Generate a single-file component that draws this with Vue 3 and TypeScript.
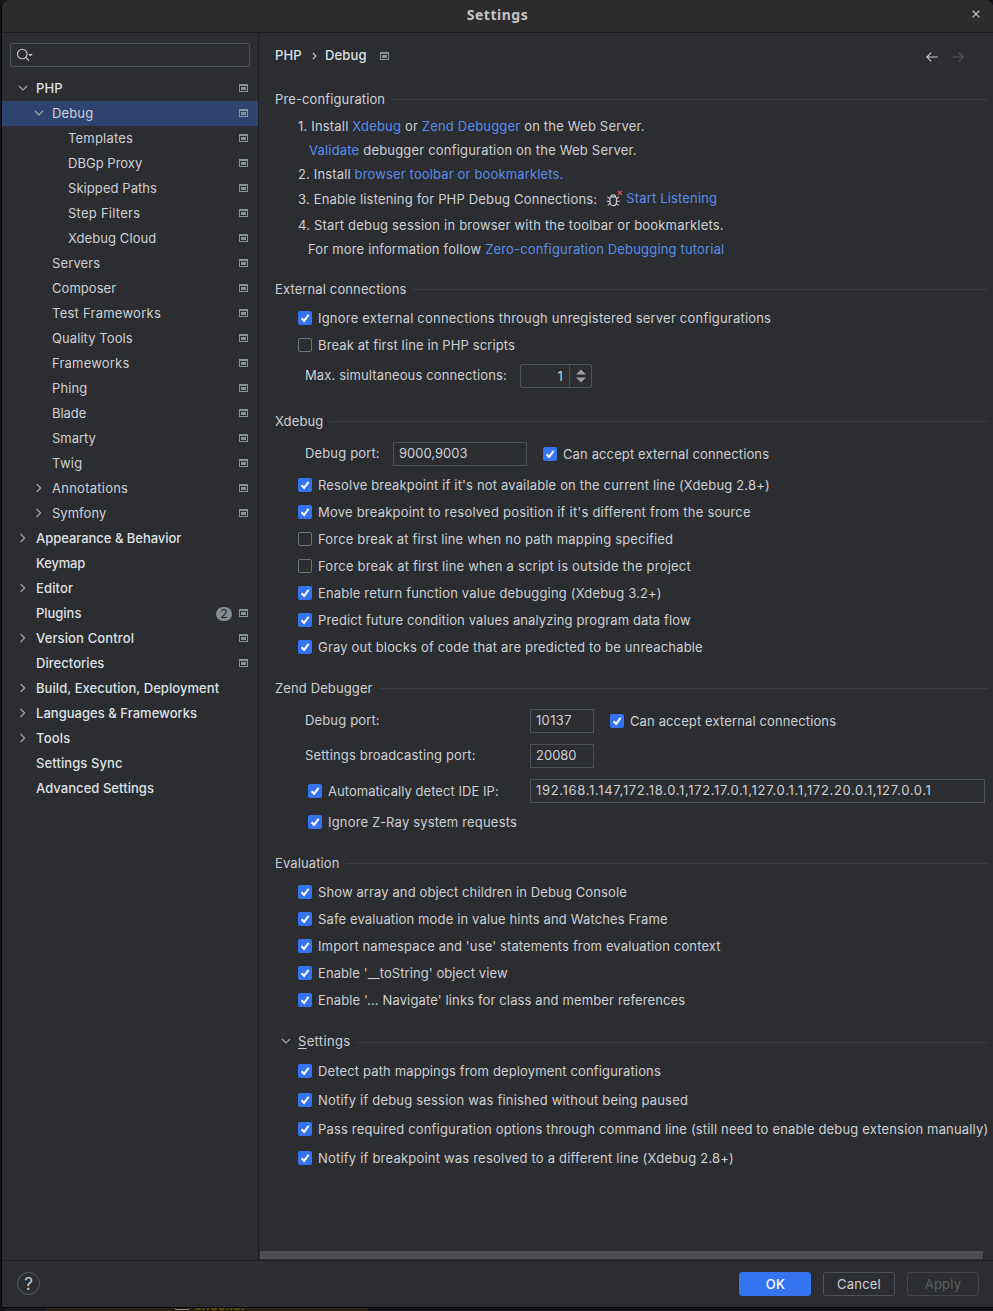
<script setup lang="ts">
interface TreeItem {
  label: string
  level: number
  track: number
  arrow?: 'open' | 'closed'
  project?: boolean
  badge?: number
  selected?: boolean
}
interface Check {
  label: string
  on: boolean
  track: number
}

const tree: TreeItem[] = [
  { label: 'PHP', level: 0, track: 0.1, arrow: 'open', project: true },
  { label: 'Debug', level: 1, track: 0.15, arrow: 'open', project: true, selected: true },
  { label: 'Templates', level: 2, track: 0.2, project: true },
  { label: 'DBGp Proxy', level: 2, track: 0.02, project: true },
  { label: 'Skipped Paths', level: 2, track: 0.07, project: true },
  { label: 'Step Filters', level: 2, track: 0.25, project: true },
  { label: 'Xdebug Cloud', level: 2, track: 0.08, project: true },
  { label: 'Servers', level: 1, track: 0.12, project: true },
  { label: 'Composer', level: 1, track: 0.05, project: true },
  { label: 'Test Frameworks', level: 1, track: 0.25, project: true },
  { label: 'Quality Tools', level: 1, track: 0.08, project: true },
  { label: 'Frameworks', level: 1, track: 0.2, project: true },
  { label: 'Phing', level: 1, track: 0.1, project: true },
  { label: 'Blade', level: 1, track: -0.05, project: true },
  { label: 'Smarty', level: 1, track: -0.05, project: true },
  { label: 'Twig', level: 1, track: 0.3, project: true },
  { label: 'Annotations', level: 1, track: 0.25, arrow: 'closed', project: true },
  { label: 'Symfony', level: 1, track: 0.03, arrow: 'closed', project: true },
  { label: 'Appearance & Behavior', level: 0, track: -0.03, arrow: 'closed' },
  { label: 'Keymap', level: 0, track: -0.18 },
  { label: 'Editor', level: 0, track: 0.15, arrow: 'closed' },
  { label: 'Plugins', level: 0, track: -0.03, project: true, badge: 2 },
  { label: 'Version Control', level: 0, track: 0.13, arrow: 'closed', project: true },
  { label: 'Directories', level: 0, track: 0.05, project: true },
  { label: 'Build, Execution, Deployment', level: 0, track: 0.06, arrow: 'closed' },
  { label: 'Languages & Frameworks', level: 0, track: 0.03, arrow: 'closed' },
  { label: 'Tools', level: 0, track: 0.2, arrow: 'closed' },
  { label: 'Settings Sync', level: 0, track: 0.1 },
  { label: 'Advanced Settings', level: 0, track: 0.05 },
]

const external: Check[] = [
  { label: 'Ignore external connections through unregistered server configurations', on: true, track: 0.205 },
  { label: 'Break at first line in PHP scripts', on: false, track: 0.12 },
]
const xdebug: Check[] = [
  { label: "Resolve breakpoint if it's not available on the current line (Xdebug 2.8+)", on: true, track: 0.16 },
  { label: "Move breakpoint to resolved position if it's different from the source", on: true, track: 0.22 },
  { label: 'Force break at first line when no path mapping specified', on: false, track: 0.17 },
  { label: 'Force break at first line when a script is outside the project', on: false, track: 0.21 },
  { label: 'Enable return function value debugging (Xdebug 3.2+)', on: true, track: 0.17 },
  { label: 'Predict future condition values analyzing program data flow', on: true, track: 0.11 },
  { label: 'Gray out blocks of code that are predicted to be unreachable', on: true, track: 0.18 },
]
const evaluation: Check[] = [
  { label: 'Show array and object children in Debug Console', on: true, track: 0.11 },
  { label: 'Safe evaluation mode in value hints and Watches Frame', on: true, track: 0.14 },
  { label: "Import namespace and 'use' statements from evaluation context", on: true, track: 0.13 },
  { label: "Enable '__toString' object view", on: true, track: 0.08 },
  { label: "Enable '... Navigate' links for class and member references", on: true, track: 0.135 },
]
const advanced: Check[] = [
  { label: 'Detect path mappings from deployment configurations', on: true, track: 0.14 },
  { label: 'Notify if debug session was finished without being paused', on: true, track: 0.19 },
  { label: 'Pass required configuration options through command line (still need to enable debug extension manually)', on: true, track: 0.165 },
  { label: 'Notify if breakpoint was resolved to a different line (Xdebug 2.8+)', on: true, track: 0.205 },
]

const spacing = (track: number) => ({ letterSpacing: `${track}px` })
</script>

<template>
  <svg class="defs" width="0" height="0">
    <symbol id="tick" viewBox="0 0 14 14">
      <path d="M3.6 7.2 6.1 9.9 10.6 3.8" fill="none" stroke="#fff" stroke-width="2" />
    </symbol>
    <symbol id="project" viewBox="0 0 9 8">
      <path d="M0 0H9V8H0ZM1 2V7H8V2Z" fill="#87939a" fill-rule="evenodd" />
      <path d="M2 3H7V6H2Z" fill="#87939a" />
    </symbol>
    <symbol id="down" viewBox="0 0 10 6">
      <path d="M1 1 5 5 9 1" fill="none" stroke="#a5a8ae" stroke-width="1.1" />
    </symbol>
    <symbol id="right" viewBox="0 0 6 10">
      <path d="M.6 1 4.6 5 .6 9" fill="none" stroke="#a5a8ae" stroke-width="1.1" />
    </symbol>
  </svg>

  <div class="screen">
    <div class="window">
      <header class="titlebar">
        <span class="title">Settings</span>
        <svg class="close" width="8" height="8" viewBox="0 0 8 8"><path d="M.6.6 7.4 7.4M7.4.6.6 7.4" stroke="#c4c4c4" stroke-width="1.3" /></svg>
      </header>

      <div class="body">
        <nav class="sidebar">
          <div class="search">
            <svg width="18" height="14" viewBox="0 0 18 14">
              <circle cx="5.3" cy="6" r="4.8" fill="none" stroke="#ced0d6" stroke-width="1.1" />
              <path d="M8.7 9.4 12 12.7" stroke="#ced0d6" stroke-width="1.1" />
              <path d="M11.2 6H15.8L13.5 8.3Z" fill="#ced0d6" />
            </svg>
          </div>
          <div v-for="item in tree" :key="item.label" class="node" :class="['level-' + item.level, { selected: item.selected }]">
            <span class="arrow">
              <svg v-if="item.arrow === 'open'" width="10" height="6"><use href="#down" /></svg>
              <svg v-else-if="item.arrow === 'closed'" width="6" height="10"><use href="#right" /></svg>
            </span>
            <span class="name" :style="spacing(item.track)">{{ item.label }}</span>
            <span v-if="item.badge" class="badge">{{ item.badge }}</span>
            <svg v-if="item.project" class="project" width="9" height="8"><use href="#project" /></svg>
          </div>
        </nav>

        <main class="content">
          <div class="crumbs">
            <span class="crumb first">PHP</span>
            <svg width="5" height="8" viewBox="0 0 5 8"><path d="M1 .8 3.8 4 1 7.2" fill="none" stroke="#ced0d6" stroke-width="1.2" /></svg>
            <span class="crumb last">Debug</span>
            <svg width="9" height="8"><use href="#project" /></svg>
            <span class="history">
              <svg width="12" height="10" viewBox="0 0 12 10"><path d="M5.2.7.9 5 5.2 9.3M1 5H11.6" fill="none" stroke="#ced0d6" stroke-width="1.1" /></svg>
              <svg width="12" height="10" viewBox="0 0 12 10"><path d="M6.8.7 11.1 5 6.8 9.3M11 5H.4" fill="none" stroke="#55585d" stroke-width="1.1" /></svg>
            </span>
          </div>

          <section class="pre">
            <h2><span>Pre-configuration</span></h2>
            <p class="step s1">1. Install <a>Xdebug</a> or <a>Zend Debugger</a> on the Web Server.</p>
            <p class="step sub v"><a>Validate</a> debugger configuration on the Web Server.</p>
            <p class="step s2">2. Install <a>browser toolbar or bookmarklets.</a></p>
            <div class="step listen">
              <span>3. Enable listening for PHP Debug Connections:</span>
              <svg width="17" height="17" viewBox="0 0 17 17">
                <g fill="none" stroke="#ced0d6" stroke-width="1.1">
                  <path d="M4 8.4Q4 6.9 5.5 6.9H8.9Q10.4 6.9 10.4 8.4V11.9Q10.4 15.6 7.2 15.6T4 11.9Z" />
                  <path d="M4.9 6.9Q4.9 4.9 7.2 4.9T9.5 6.9M4 9 1.5 6.9M10.4 9 12.9 6.9M4 11.2H.7M10.4 11.2H13.7M4.4 13.2 1.8 15.4M10 13.2 12.6 15.4" />
                </g>
                <path d="M11.8.8 15.8 4.8M15.8.8 11.8 4.8" stroke="#e55765" stroke-width="1.2" />
              </svg>
              <a>Start Listening</a>
            </div>
            <p class="step s4">4. Start debug session in browser with the toolbar or bookmarklets.</p>
            <p class="step sub f">For more information follow <a>Zero-configuration Debugging tutorial</a></p>
          </section>

          <section>
            <h2><span>External connections</span></h2>
            <div class="checks">
              <label v-for="c in external" :key="c.label" class="check">
                <i class="box" :class="{ on: c.on }"><svg v-if="c.on" width="14" height="14"><use href="#tick" /></svg></i>
                <span :style="spacing(c.track)">{{ c.label }}</span>
              </label>
            </div>
            <div class="row max">
              <span class="caption">Max. simultaneous connections:</span>
              <div class="spinner">
                <span class="value">1</span>
                <span class="buttons"><svg width="10" height="14" viewBox="0 0 10 14"><path d="M0 5.5 5 .5 10 5.5ZM0 8.5H10L5 13.5Z" fill="#9a9ca2" /></svg></span>
              </div>
            </div>
          </section>

          <section class="x">
            <h2><span>Xdebug</span></h2>
            <div class="row port">
              <span class="caption">Debug port:</span>
              <span class="field mid">9000,9003</span>
              <label class="check"><i class="box on"><svg width="14" height="14"><use href="#tick" /></svg></i><span class="accept">Can accept external connections</span></label>
            </div>
            <div class="checks">
              <label v-for="c in xdebug" :key="c.label" class="check">
                <i class="box" :class="{ on: c.on }"><svg v-if="c.on" width="14" height="14"><use href="#tick" /></svg></i>
                <span :style="spacing(c.track)">{{ c.label }}</span>
              </label>
            </div>
          </section>

          <section class="zend">
            <h2><span>Zend Debugger</span></h2>
            <div class="row">
              <span class="caption">Debug port:</span>
              <span class="field small one">10137</span>
              <label class="check"><i class="box on"><svg width="14" height="14"><use href="#tick" /></svg></i><span class="accept">Can accept external connections</span></label>
            </div>
            <div class="row">
              <span class="caption">Settings broadcasting port:</span>
              <span class="field small">20080</span>
            </div>
            <div class="row">
              <label class="check auto inset"><i class="box on"><svg width="14" height="14"><use href="#tick" /></svg></i><span>Automatically detect IDE IP:</span></label>
              <span class="field wide">192.168.1.147,172.18.0.1,172.17.0.1,127.0.1.1,172.20.0.1,127.0.0.1</span>
            </div>
            <label class="check inset zray"><i class="box on"><svg width="14" height="14"><use href="#tick" /></svg></i><span>Ignore Z-Ray system requests</span></label>
          </section>

          <section class="eval">
            <h2><span>Evaluation</span></h2>
            <div class="checks">
              <label v-for="c in evaluation" :key="c.label" class="check">
                <i class="box" :class="{ on: c.on }"><svg v-if="c.on" width="14" height="14"><use href="#tick" /></svg></i>
                <span :style="spacing(c.track)">{{ c.label }}</span>
              </label>
            </div>
          </section>

          <section class="more">
            <h2><svg class="fold" width="10" height="6"><use href="#down" /></svg><span><u>S</u>ettings</span></h2>
            <div class="checks loose">
              <label v-for="c in advanced" :key="c.label" class="check">
                <i class="box" :class="{ on: c.on }"><svg v-if="c.on" width="14" height="14"><use href="#tick" /></svg></i>
                <span :style="spacing(c.track)">{{ c.label }}</span>
              </label>
            </div>
          </section>

          <div class="scrollbar"></div>
        </main>
      </div>

      <footer class="footer">
        <span class="help">?</span>
        <button class="btn primary">OK</button>
        <button class="btn">Cancel</button>
        <button class="btn off">Apply</button>
      </footer>
    </div>
    <div class="behind">
      <span class="gutter"></span>
      <span class="strip"><i class="chip"></i><span class="peek">checker</span></span>
    </div>
  </div>
</template>

<style>
html,
body {
  margin: 0;
  background: #141518;
  overflow: hidden;
}
</style>

<style scoped>
* {
  box-sizing: border-box;
}
.defs {
  display: none;
}
.screen {
  width: 993px;
  height: 1311px;
  background: #141518;
  overflow: hidden;
  font: 13px/16px Inter, "Liberation Sans", sans-serif;
  letter-spacing: 0.15px;
  color: #ced0d6;
  white-space: nowrap;
}
svg {
  display: block;
  flex: none;
}
.window {
  display: flex;
  flex-direction: column;
  height: 1308px;
  margin-left: 1px;
  border-left: 1px solid #050505;
  border-bottom: 1px solid #050505;
  border-radius: 8px 8px 0 0;
  background: #2b2d30;
  overflow: hidden;
}
.titlebar {
  display: flex;
  align-items: center;
  flex: none;
  height: 33px;
  padding: 0 13px 4px 0;
  border-bottom: 1px solid #1c1d1c;
  background: #2c2c2c;
}
.title {
  flex: 1;
  padding: 2px 0 0 21px;
  text-align: center;
  font: bold 14px/18px "Noto Sans", sans-serif;
  letter-spacing: 0.5px;
  color: #c3c3c3;
}
.body {
  display: flex;
  flex: none;
  height: 1227px;
}
.sidebar {
  flex: none;
  width: 257px;
  padding-top: 10px;
  border-right: 1px solid #1e1f22;
}
.search {
  display: flex;
  align-items: center;
  width: 240px;
  height: 24px;
  margin: 0 0 9px 8px;
  padding-left: 6px;
  border: 1px solid #4e5157;
  border-radius: 2px;
}
.node {
  display: flex;
  align-items: center;
  height: 25px;
  padding: 0 10px 2px 0;
  color: #ced0d6;
}
.node.selected {
  background: #2e436e;
}
.arrow {
  display: flex;
  justify-content: center;
  flex: none;
  width: 10px;
  margin: 0 8px 0 16px;
}
.level-0 .name {
  font-weight: 500;
  color: #dfe1e5;
}
.level-1 .arrow {
  margin-left: 32px;
}
.level-2 .arrow {
  margin-left: 48px;
}
.name {
  flex: 1;
}
.badge {
  width: 16px;
  height: 14px;
  margin: 3px 7px 0 0;
  border-radius: 7px;
  background: #868a91;
  color: #1e1f22;
  font-size: 12px;
  line-height: 14px;
  letter-spacing: 0;
  text-align: center;
}
.content {
  display: flex;
  flex-direction: column;
  flex: 1;
  min-width: 0;
  padding-left: 16px;
}
.crumbs {
  display: flex;
  align-items: center;
  height: 46px;
  margin-bottom: 8px;
  font-weight: 500;
  color: #dfe1e5;
}
.crumb {
  padding-bottom: 2px;
}
.crumb.first {
  width: 37px;
}
.crumb.last {
  width: 55px;
  margin-left: 8px;
}
.history {
  display: flex;
  gap: 14px;
  margin: 2px 29px 0 auto;
}
h2 {
  display: flex;
  align-items: center;
  height: 25px;
  margin: 0;
  padding-right: 5px;
  font: inherit;
  letter-spacing: 0.12px;
}
h2 span {
  padding-bottom: 2px;
}
h2::after {
  content: "";
  flex: 1;
  height: 1px;
  margin-left: 6px;
  background: #393b40;
}
.step {
  margin: 0;
  height: 24px;
  padding-left: 23px;
  line-height: 24px;
}
.s1 {
  margin-top: 2px;
  letter-spacing: 0.185px;
}
.step.sub {
  padding-left: 33px;
}
.step.v {
  padding-left: 34px;
  letter-spacing: 0.19px;
}
.step.f {
  letter-spacing: 0.17px;
}
.step a {
  color: #5a8cec;
}
.listen {
  display: flex;
  height: 26px;
  line-height: 26px;
  letter-spacing: 0.17px;
}
.listen svg {
  margin: 4px 3px 0 9px;
}
.listen a {
  margin-top: -1px;
}
.s4 {
  margin-top: 1px;
  letter-spacing: 0.195px;
}
.pre {
  margin-bottom: 16px;
}
.checks {
  display: flex;
  flex-direction: column;
  gap: 1px;
  margin-top: 3px;
  padding-left: 23px;
}
.check {
  display: flex;
  align-items: center;
  height: 26px;
}
.accept {
  letter-spacing: 0.125px;
}
.box {
  flex: none;
  width: 14px;
  height: 14px;
  margin-right: 6px;
  border: 1px solid #6f737a;
  border-radius: 2px;
}
.box.on {
  border: 0;
  background: #3574f0;
}
.row {
  display: flex;
  align-items: center;
  height: 24px;
  padding-left: 30px;
}
.caption {
  padding-bottom: 2px;
}
.max {
  margin: 6px 0 21px;
}
.max .caption {
  width: 215px;
  letter-spacing: 0.13px;
}
.spinner {
  display: flex;
  width: 72px;
  height: 24px;
  border: 1px solid #4e5157;
  border-radius: 2px;
  line-height: 23px;
}
.spinner .value {
  flex: 1;
  padding-right: 6px;
  text-align: right;
}
.spinner .buttons {
  display: flex;
  align-items: center;
  justify-content: center;
  width: 22px;
  border-left: 1px solid #4e5157;
}
.field {
  height: 24px;
  margin-right: 16px;
  padding-left: 5px;
  border: 1px solid #4e5157;
  line-height: 21px;
  letter-spacing: 0;
}
.field.one {
  letter-spacing: 0.33px;
}
.field.mid {
  width: 134px;
}
.field.small {
  width: 64px;
}
.field.wide {
  width: 455px;
  margin: 0;
  letter-spacing: 0.665px;
}
.port {
  margin: 8px 0 6px;
}
.port .caption {
  width: 88px;
}
.x .checks {
  margin: 0;
}
.x {
  margin-bottom: 16px;
}
.zend .row {
  margin-top: 11px;
}
.zend h2 + .row {
  margin-top: 8px;
}
.zend .caption,
.auto {
  flex: none;
  width: 225px;
}
.auto {
  padding-left: 3px;
  letter-spacing: 0.05px;
}
.zray {
  margin: 6px 0 16px;
  padding-left: 33px;
  letter-spacing: 0.18px;
}
.eval {
  margin-bottom: 17px;
}
.more h2 {
  letter-spacing: 0.33px;
}
.more h2 span {
  padding-bottom: 3px;
}
.fold {
  margin: -3px 7px 0 6px;
}
u {
  text-underline-offset: 2px;
}
.loose {
  gap: 3px;
}
.scrollbar {
  width: 723px;
  height: 8px;
  margin: auto 0 1px -15px;
  background: #4d4e51;
}
.footer {
  display: flex;
  flex: none;
  height: 47px;
  padding: 11px 14px 0 15px;
  border-top: 1px solid #1e1f22;
}
.help {
  width: 23px;
  height: 23px;
  margin-right: auto;
  border: 1px solid #5a5d63;
  border-radius: 50%;
  font-size: 17px;
  line-height: 23px;
  letter-spacing: 0;
  text-align: center;
}
.btn {
  width: 72px;
  height: 24px;
  margin: 0 0 0 12px;
  padding: 0;
  border: 1px solid #4e5157;
  border-radius: 3px;
  background: none;
  font: inherit;
  letter-spacing: 0.2px;
  color: #ced0d6;
}
.btn.primary {
  padding-left: 1px;
  border-color: #3574f0;
  background: #3574f0;
  color: #fff;
  font-weight: 500;
}
.btn.off {
  border-color: #43454a;
  color: #5a5d63;
}
.behind {
  display: flex;
  height: 3px;
  overflow: hidden;
}
.gutter {
  width: 40px;
  margin-left: 6px;
  background: #1a1b22;
}
.strip {
  display: flex;
  width: 322px;
  padding-left: 129px;
  background: #2b2016;
}
.chip {
  width: 14px;
  height: 2px;
  margin-right: 5px;
  border: 1px solid #8d8d8d;
  border-top: 0;
  border-radius: 0 0 2px 2px;
}
.peek {
  margin-top: -10px;
  line-height: 14px;
  letter-spacing: 0.4px;
  color: #6f6800;
}
</style>
